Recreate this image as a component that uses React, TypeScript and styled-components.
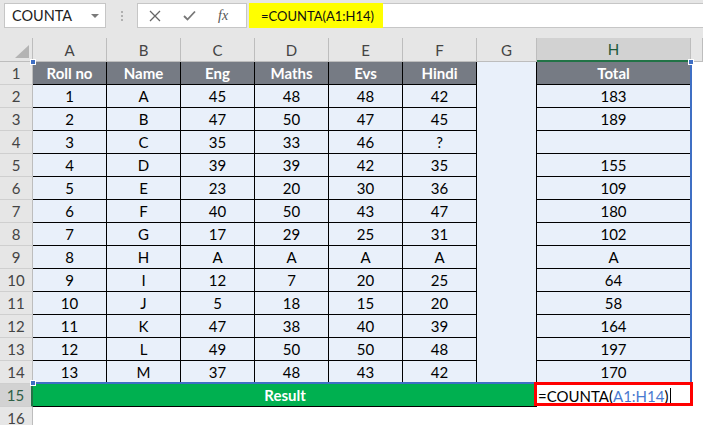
import { Fragment } from 'react'
import styled, { createGlobalStyle, css } from 'styled-components'

const GlobalStyle = createGlobalStyle`
  body {
    margin: 0;
    background: #fff;
    font-family: Lato, 'Liberation Sans', sans-serif;
  }
`

const Window = styled.div`
  width: 703px;
  height: 425px;
  overflow: hidden;
  background: #fff;
`

const FormulaBar = styled.div`
  height: 38px;
  box-sizing: border-box;
  padding: 3px 0 0 4px;
  background: #e6e6e6;
  display: flex;
  align-items: flex-start;
`

const NameBox = styled.div`
  width: 102px;
  height: 25px;
  box-sizing: border-box;
  padding: 0 6px 0 7px;
  background: #fff;
  border: 1px solid #c6c6c6;
  display: flex;
  align-items: center;
  justify-content: space-between;
  font-size: 14.5px;
  color: #222;
`

const Arrow = styled.span`
  width: 0;
  height: 0;
  border-left: 4px solid transparent;
  border-right: 4px solid transparent;
  border-top: 4px solid #7a7a7a;
`

const Grip = styled.div`
  width: 31px;
  height: 25px;
  display: flex;
  flex-direction: column;
  align-items: center;
  justify-content: center;
  gap: 2px;

  span {
    width: 2px;
    height: 2px;
    background: #b0b0b0;
  }
`

const Buttons = styled.div`
  width: 110px;
  height: 25px;
  box-sizing: border-box;
  background: #fff;
  border: 1px solid #c6c6c6;
  display: flex;
  align-items: center;
  padding-left: 11px;
  gap: 22px;
`

const Fx = styled.span`
  font-family: 'Liberation Serif', serif;
  font-style: italic;
  font-size: 14px;
  color: #555;
`

const Input = styled.div`
  flex: 1;
  height: 25px;
  margin-left: 2px;
  box-sizing: border-box;
  background: #fff;
  border-top: 1px solid #c6c6c6;
  border-bottom: 1px solid #c6c6c6;
  display: flex;
`

const Highlight = styled.span`
  width: 134px;
  height: 25px;
  margin-top: -1px;
  box-sizing: border-box;
  padding-left: 12px;
  background: #ffff00;
  display: flex;
  align-items: center;
  font-size: 13px;
  color: #111;
  white-space: nowrap;
`

const Sheet = styled.div`
  position: relative;
  display: grid;
  grid-template-columns: 33px repeat(6, 74px) 60px 154px 12px;
  grid-template-rows: 24px repeat(16, 23px);
  font-size: 15px;
`

const Corner = styled.div`
  background: #e6e6e6;
  border-right: 1px solid #bdbdbd;
  border-bottom: 1px solid #bdbdbd;
  display: flex;
  align-items: flex-end;
  justify-content: flex-end;
  padding: 0 3px 3px 0;
`

const ColHead = styled.div<{ $selected?: boolean }>`
  box-sizing: border-box;
  background: ${({ $selected }) => ($selected ? '#d2d2d2' : '#e6e6e6')};
  border-right: 1px solid #bdbdbd;
  border-bottom: ${({ $selected }) => ($selected ? '2px solid #217346' : '1px solid #bdbdbd')};
  display: flex;
  align-items: center;
  justify-content: center;
  color: ${({ $selected }) => ($selected ? '#1f5a3a' : '#444')};
`

const RowHead = styled.div<{ $selected?: boolean }>`
  box-sizing: border-box;
  background: ${({ $selected }) => ($selected ? '#d2d2d2' : '#e6e6e6')};
  border-right: ${({ $selected }) => ($selected ? '2px solid #217346' : '1px solid #bdbdbd')};
  border-bottom: 1px solid #cfcfcf;
  display: flex;
  align-items: center;
  justify-content: center;
  color: ${({ $selected }) => ($selected ? '#2f5f46' : '#444')};
`

type Kind = 'title' | 'data' | 'gap' | 'empty'

const kinds = {
  title: css`
    background: #767b84;
    color: #fff;
    font-weight: 700;
    border-right: 1px solid #000;
    border-bottom: 1px solid #000;
  `,
  data: css`
    background: #e9f0fa;
    color: #000;
    border-right: 1px solid #000;
    border-bottom: 1px solid #000;
  `,
  gap: css`
    background: #e9f0fa;
    border-right: 1px solid #000;
  `,
  empty: css`
    background: #fff;
  `,
}

const Cell = styled.div<{ $kind: Kind }>`
  box-sizing: border-box;
  display: flex;
  align-items: center;
  justify-content: center;
  ${({ $kind }) => kinds[$kind]}
`

const ResultCell = styled.div`
  grid-column: span 7;
  box-sizing: border-box;
  background: #00b050;
  border-bottom: 1px solid #000;
  color: #fff;
  font-weight: 700;
  display: flex;
  align-items: center;
  justify-content: center;
`

const FormulaCell = styled.div`
  position: relative;
  z-index: 2;
  padding-left: 1px;
  display: flex;
  align-items: center;
  background: #fff;
  color: #000;
  white-space: nowrap;

  &::after {
    content: '';
    position: absolute;
    top: -2px;
    left: -3px;
    right: -2px;
    bottom: 1px;
    border: 3px solid #ff0000;
  }
`

const Ref = styled.span`
  color: #4a7ad0;
`

const Caret = styled.span`
  width: 1px;
  height: 15px;
  margin-left: 2px;
  background: #000;
`

const Range = styled.div`
  position: absolute;
  top: 24px;
  left: 33px;
  width: 659px;
  height: 322px;
  box-sizing: border-box;
  border-right: 2px solid #3f6fc4;
  border-bottom: 2px solid #3f6fc4;
  pointer-events: none;
`

const Handle = styled.span<{ $x: 'left' | 'right'; $y: 'top' | 'bottom' }>`
  position: absolute;
  width: 4px;
  height: 4px;
  background: #3f6fc4;
  border: 1px solid #fff;
  ${({ $x }) => ($x === 'left' ? 'left: -3px;' : 'right: -4px;')}
  ${({ $y }) => ($y === 'top' ? 'top: -3px;' : 'bottom: -4px;')}
`

const columns = ['A', 'B', 'C', 'D', 'E', 'F', 'G', 'H']

const rows: string[][] = [
  ['Roll no', 'Name', 'Eng', 'Maths', 'Evs', 'Hindi', '', 'Total'],
  ['1', 'A', '45', '48', '48', '42', '', '183'],
  ['2', 'B', '47', '50', '47', '45', '', '189'],
  ['3', 'C', '35', '33', '46', '?', '', ''],
  ['4', 'D', '39', '39', '42', '35', '', '155'],
  ['5', 'E', '23', '20', '30', '36', '', '109'],
  ['6', 'F', '40', '50', '43', '47', '', '180'],
  ['7', 'G', '17', '29', '25', '31', '', '102'],
  ['8', 'H', 'A', 'A', 'A', 'A', '', 'A'],
  ['9', 'I', '12', '7', '20', '25', '', '64'],
  ['10', 'J', '5', '18', '15', '20', '', '58'],
  ['11', 'K', '47', '38', '40', '39', '', '164'],
  ['12', 'L', '49', '50', '50', '48', '', '197'],
  ['13', 'M', '37', '48', '43', '42', '', '170'],
]

function Toolbar () {
  return (
    <FormulaBar>
      <NameBox>
        COUNTA
        <Arrow />
      </NameBox>
      <Grip>
        <span />
        <span />
        <span />
      </Grip>
      <Buttons>
        <svg width='12' height='12' viewBox='0 0 12 12'>
          <path d='M1 1 L11 11 M11 1 L1 11' stroke='#666' strokeWidth='1.3' fill='none' />
        </svg>
        <svg width='13' height='11' viewBox='0 0 13 11'>
          <path d='M1 6 L4.5 9.5 L12 1.5' stroke='#777' strokeWidth='1.8' fill='none' />
        </svg>
        <Fx>fx</Fx>
      </Buttons>
      <Input>
        <Highlight>=COUNTA(A1:H14)</Highlight>
      </Input>
    </FormulaBar>
  )
}

export default function App () {
  return (
    <Window>
      <GlobalStyle />
      <Toolbar />
      <Sheet>
        <Corner>
          <svg width='14' height='13' viewBox='0 0 14 13'>
            <path d='M0 13 L14 13 L14 0 Z' fill='#b4b4b4' />
          </svg>
        </Corner>
        {columns.map(c => (
          <ColHead key={c} $selected={c === 'H'}>{c}</ColHead>
        ))}
        <ColHead />

        {rows.map((row, r) => (
          <Fragment key={r}>
            <RowHead>{r + 1}</RowHead>
            {row.map((value, c) => (
              <Cell key={c} $kind={c === 6 ? 'gap' : r === 0 ? 'title' : 'data'}>
                {value}
              </Cell>
            ))}
            <Cell $kind='empty' />
          </Fragment>
        ))}

        <RowHead $selected>15</RowHead>
        <ResultCell>Result</ResultCell>
        <FormulaCell>
          =COUNTA(<Ref>A1:H14</Ref>)<Caret />
        </FormulaCell>
        <Cell $kind='empty' />

        <RowHead>16</RowHead>
        {columns.map(c => (
          <Cell key={c} $kind='empty' />
        ))}
        <Cell $kind='empty' />

        <Range>
          <Handle $x='left' $y='top' />
          <Handle $x='right' $y='top' />
          <Handle $x='left' $y='bottom' />
        </Range>
      </Sheet>
    </Window>
  )
}
